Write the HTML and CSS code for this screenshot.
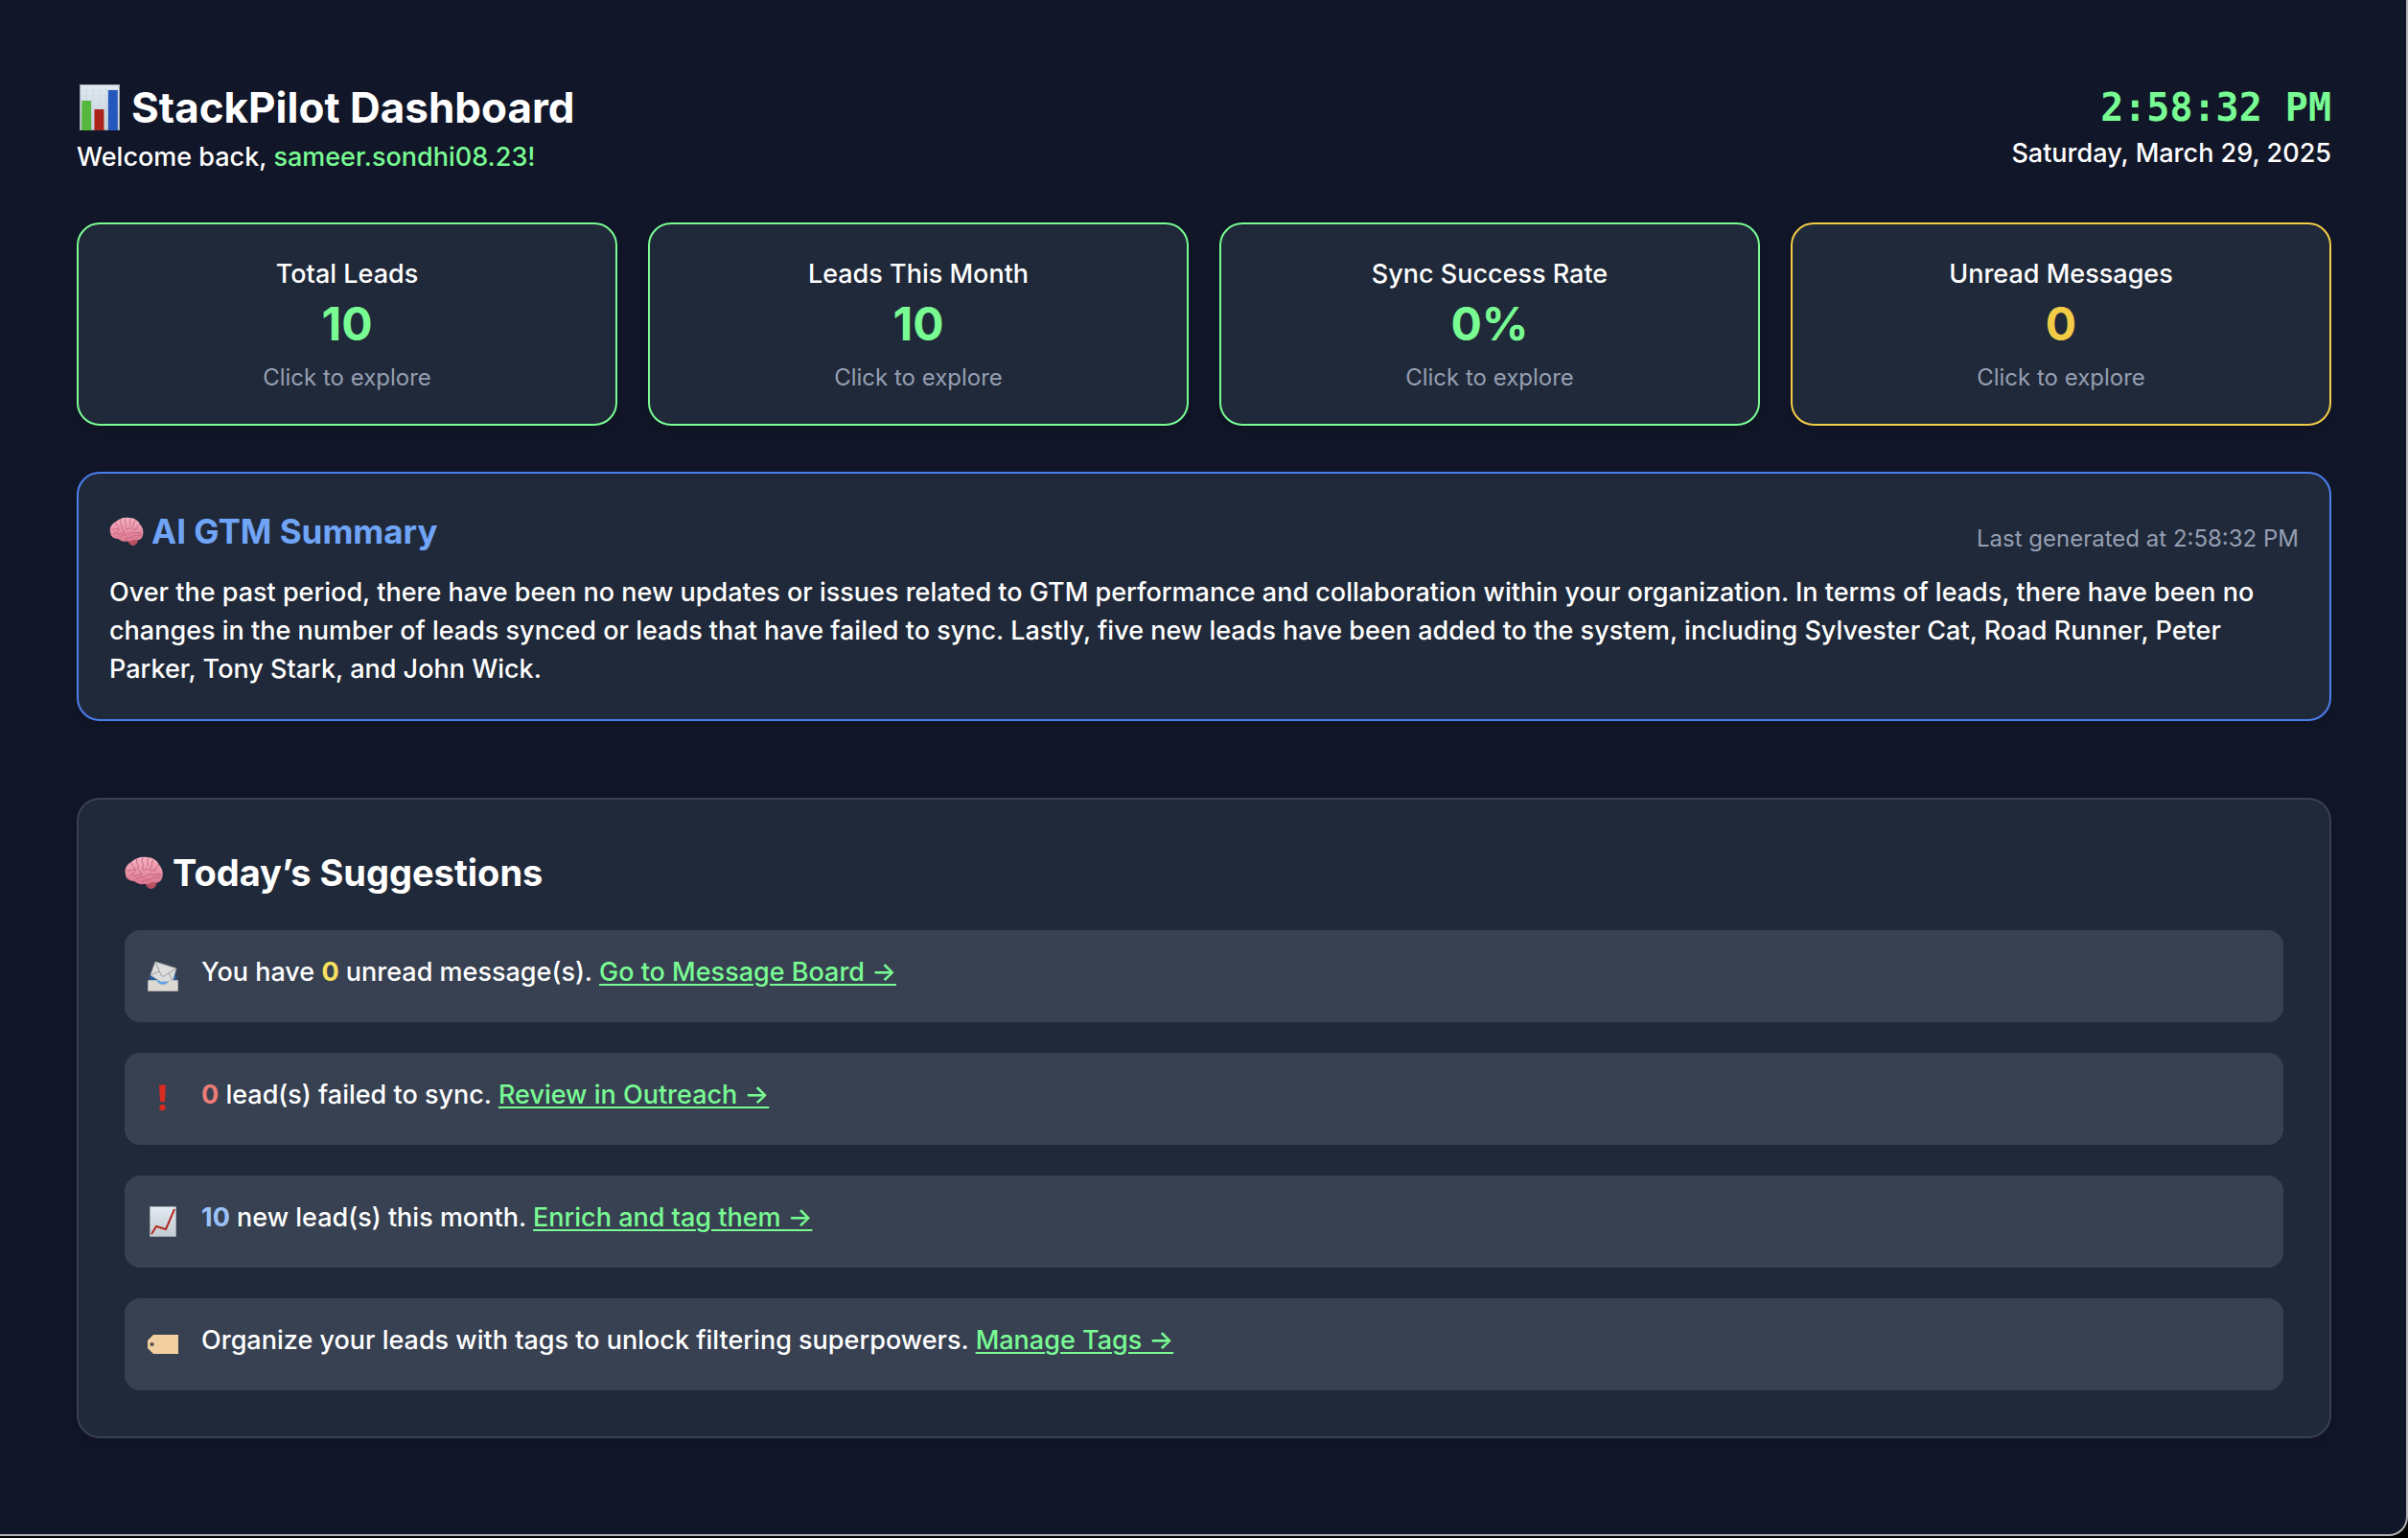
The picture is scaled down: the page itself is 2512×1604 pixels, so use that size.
FILE: index.html
```html
<!DOCTYPE html>
<html lang="en">
<head>
<meta charset="utf-8">
<meta name="viewport" content="width=device-width, initial-scale=1">
<title>StackPilot Dashboard</title>
<link rel="stylesheet" href="styles.css">
</head>
<body>
<svg class="sprite" aria-hidden="true">
  <defs>
    <linearGradient id="paper" x1="0" y1="0" x2="0" y2="1"><stop offset="0" stop-color="#e3ebf2"/><stop offset="1" stop-color="#c3cad1"/></linearGradient>
    <linearGradient id="pink" x1="0" y1="0" x2="0" y2="1"><stop offset="0" stop-color="#f7b3c3"/><stop offset="1" stop-color="#db7590"/></linearGradient>
  </defs>
  <symbol id="brain" viewBox="0 0 40 34">
    <path d="M20 26l9-2 4 2c1 4-1 7-5 8-4 0-5-3-8-8z" fill="#b95062"/>
    <path d="M1 19C-1 13 3 8 7 6c4-4 10-6 16-5 6 0 11 3 13 8 4 4 5 11 2 16-2 3-6 3-9 2-3 2-6 2-9 2-4 1-7-1-10-3-5 0-9-3-9-7z" fill="url(#pink)"/>
    <path d="M3 15c3 1 4-2 7-1M7 7c0 4 4 3 4 7s-5 4-6 7M13 3c-2 4 2 5 1 9s4 3 3 6M19 2c-3 4 2 5 0 9s3 4 5 2M25 2c-3 4 1 5-1 8M30 4c-3 3 0 5-3 8s2 4 5 2M35 9c-4 2-1 5-4 6M12 24c3-4 8-1 11-4s9 1 14-2M9 20c4 2 5-2 9-1M18 27c2-4 7-1 10-4s5 1 9-1M33 18c0 2 3 3 5 2" fill="none" stroke="#c4637c" stroke-width="1" stroke-linecap="round"/>
  </symbol>
  <symbol id="bars" viewBox="0 0 38 48" preserveAspectRatio="none">
    <path fill="url(#paper)" stroke="#9ba5ae" d="M.5.5h37v47H.5z"/>
    <path d="M1 6h36M1 12h36M1 18h36M1 24h36M1 30h36M7 1v46M13 1v46M19 1v46M25 1v46M31 1v46" stroke="#cbdbe9" stroke-width=".6"/>
    <path fill="#55b83c" d="M2 17h9v31H2z"/><path fill="#ab241b" d="M14 26h9v22h-9z"/><path fill="#2458bd" d="M27 6h9v42h-9z"/>
  </symbol>
  <symbol id="inbox" viewBox="0 0 32 32">
    <path fill="#255b9c" d="M3 14h26l2 8H1z"/><path fill="#59a2f1" d="M7 20h18v6H7z"/>
    <path fill="#dcdddc" stroke="#b4b6b6" stroke-width=".7" d="M8 1l22 7-4 13-12 1L3 15z"/>
    <path fill="none" stroke="#9a9e9f" d="M8 1l6 14q1 2 3 1L30 8M3 15l9-4M26 21l-4-8"/>
    <path fill="#dbd9d2" stroke="#c4c3bc" stroke-width=".7" d="M.5 20.500H8.500c2 0 2 4.500 7.500 4.500s5.500-4.500 7.500-4.500h8v11H.5z"/>
  </symbol>
  <symbol id="alert" viewBox="0 0 32 32">
    <path fill="#d52d20" d="M12 2c0-1 7-1 7 0l-1 17h-5z"/><circle fill="#d52d20" cx="15.500" cy="25" r="3.200"/>
  </symbol>
  <symbol id="trend" viewBox="0 0 32 32">
    <path fill="url(#paper)" stroke="#9ba5ae" d="M2.500.5h27v31h-27z"/>
    <path fill="none" stroke="#b32821" stroke-width="2" d="M4 29l5-8 10 3L28 3"/>
  </symbol>
  <symbol id="tag" viewBox="0 0 32 32">
    <path fill="#f1cfa1" d="M6 6h26v20H6l-6-6v-8z"/><circle cx="4.500" cy="16" r="2" fill="#46404a" stroke="#a58a70"/>
  </symbol>
</svg>
<main class="page">
  <header class="top">
    <div>
      <h1 class="title"><svg class="icon-bars" aria-hidden="true"><use href="#bars"/></svg>StackPilot Dashboard</h1>
      <p class="text">Welcome back, <span class="green">sameer.sondhi08.23!</span></p>
    </div>
    <div class="when">
      <p class="clock">2:58:32 PM</p>
      <p class="text">Saturday, March 29, 2025</p>
    </div>
  </header>

  <section class="stats">
    <button class="stat" type="button"><span class="text">Total Leads</span><span class="value">10</span><span class="hint">Click to explore</span></button>
    <button class="stat" type="button"><span class="text">Leads This Month</span><span class="value">10</span><span class="hint">Click to explore</span></button>
    <button class="stat" type="button"><span class="text">Sync Success Rate</span><span class="value">0%</span><span class="hint">Click to explore</span></button>
    <button class="stat stat-yellow" type="button"><span class="text">Unread Messages</span><span class="value">0</span><span class="hint">Click to explore</span></button>
  </section>

  <section class="summary">
    <div class="summary-head">
      <h2 class="summary-title"><svg class="icon-brain-small" aria-hidden="true"><use href="#brain"/></svg>AI GTM Summary</h2>
      <span class="generated">Last generated at 2:58:32 PM</span>
    </div>
    <p class="text">Over the past period, there have been no new updates or issues related to GTM performance and collaboration within your organization. In terms of leads, there have been no changes in the number of leads synced or leads that have failed to sync. Lastly, five new leads have been added to the system, including Sylvester Cat, Road Runner, Peter Parker, Tony Stark, and John Wick.</p>
  </section>

  <section class="suggestions">
    <h2 class="suggestions-title"><svg class="icon-brain" aria-hidden="true"><use href="#brain"/></svg>Today’s Suggestions</h2>
    <ul class="list">
      <li class="row"><svg class="icon" aria-hidden="true"><use href="#inbox"/></svg><p class="text">You have <b class="yellow">0</b> unread message(s). <a href="#messages">Go to Message Board →</a></p></li>
      <li class="row"><svg class="icon" aria-hidden="true"><use href="#alert"/></svg><p class="text"><b class="red">0</b> lead(s) failed to sync. <a href="#outreach">Review in Outreach →</a></p></li>
      <li class="row"><svg class="icon" aria-hidden="true"><use href="#trend"/></svg><p class="text"><b class="blue">10</b> new lead(s) this month. <a href="#enrich">Enrich and tag them →</a></p></li>
      <li class="row"><svg class="icon" aria-hidden="true"><use href="#tag"/></svg><p class="text">Organize your leads with tags to unlock filtering superpowers. <a href="#tags">Manage Tags →</a></p></li>
    </ul>
  </section>
</main>
</body>
</html>
```
FILE: styles.css
```css
* { box-sizing: border-box; margin: 0; padding: 0; }

html { background: #000; }

body {
  min-height: calc(100vh - 2px);
  background: #111628;
  border: solid #b4b4b6;
  border-width: 0 2px 2px 0;
  border-radius: 0 0 20px 0;
  color: #fff;
  font-family: Inter, "Liberation Sans", sans-serif;
  font-size: 27px;
  line-height: 40px;
}

.sprite { position: absolute; width: 0; height: 0; }

.page { padding: 80px 78px 80px 80px; }

.text { font-size: 27px; line-height: 40px; font-weight: 450; }

.top { display: flex; justify-content: space-between; align-items: center; margin-bottom: 48px; }
.title { display: flex; align-items: center; gap: 12px; font-size: 44px; line-height: 64px; font-weight: 700; }
.icon-bars { width: 42px; height: 48px; margin-left: 3px; }
.green { color: #79fb93; }
.when { text-align: right; }
.clock { font-family: "DejaVu Sans Mono", monospace; font-size: 40px; line-height: 56px; font-weight: 700; color: #79fb93; }

.stats { display: grid; grid-template-columns: repeat(4, 1fr); gap: 32px; margin-bottom: 48px; }
.stat {
  display: flex;
  flex-direction: column;
  align-items: center;
  padding: 32px;
  border: 2px solid #79fb93;
  border-radius: 24px;
  background: #202939;
  color: #fff;
  font-family: inherit;
  box-shadow: 0 4px 12px rgba(0, 0, 0, .1);
}
.value { font-size: 48px; line-height: 64px; font-weight: 700; color: #79fb93; }
.hint { margin-top: 8px; font-size: 24px; line-height: 32px; color: #959fb2; }
.stat-yellow { border-color: #f2cc46; }
.stat-yellow .value { color: #f2cc46; }

.summary {
  padding: 32px;
  margin-bottom: 80px;
  border: 2px solid #4b7fec;
  border-radius: 24px;
  background: #202939;
  box-shadow: 0 4px 12px rgba(0, 0, 0, .1);
}
.summary-head { display: flex; justify-content: space-between; align-items: flex-end; margin-bottom: 16px; }
.summary-title { display: flex; align-items: center; gap: 8px; font-size: 35px; line-height: 56px; font-weight: 650; color: #6fa4f7; }
.icon-brain-small { width: 36px; height: 30px; }
.generated { font-size: 24px; line-height: 40px; color: #959fb2; }

.suggestions {
  padding: 48px;
  border: 2px solid #374152;
  border-radius: 24px;
  background: #202939;
  box-shadow: 0 4px 12px rgba(0, 0, 0, .1);
}
.suggestions-title { display: flex; align-items: center; gap: 10px; margin-bottom: 32px; font-size: 38px; line-height: 56px; font-weight: 650; }
.icon-brain { width: 40px; height: 34px; }
.list { display: flex; flex-direction: column; gap: 32px; list-style: none; }
.row { display: flex; align-items: flex-start; gap: 24px; padding: 24px; border-radius: 16px; background: #374152; }
.icon { width: 32px; height: 48px; }
.row a { color: #79fb93; text-decoration: underline; text-underline-offset: 3px; text-decoration-thickness: 2px; }
.yellow { color: #fae05f; }
.red { color: #ec7c77; }
.blue { color: #9bc3fa; }
```
